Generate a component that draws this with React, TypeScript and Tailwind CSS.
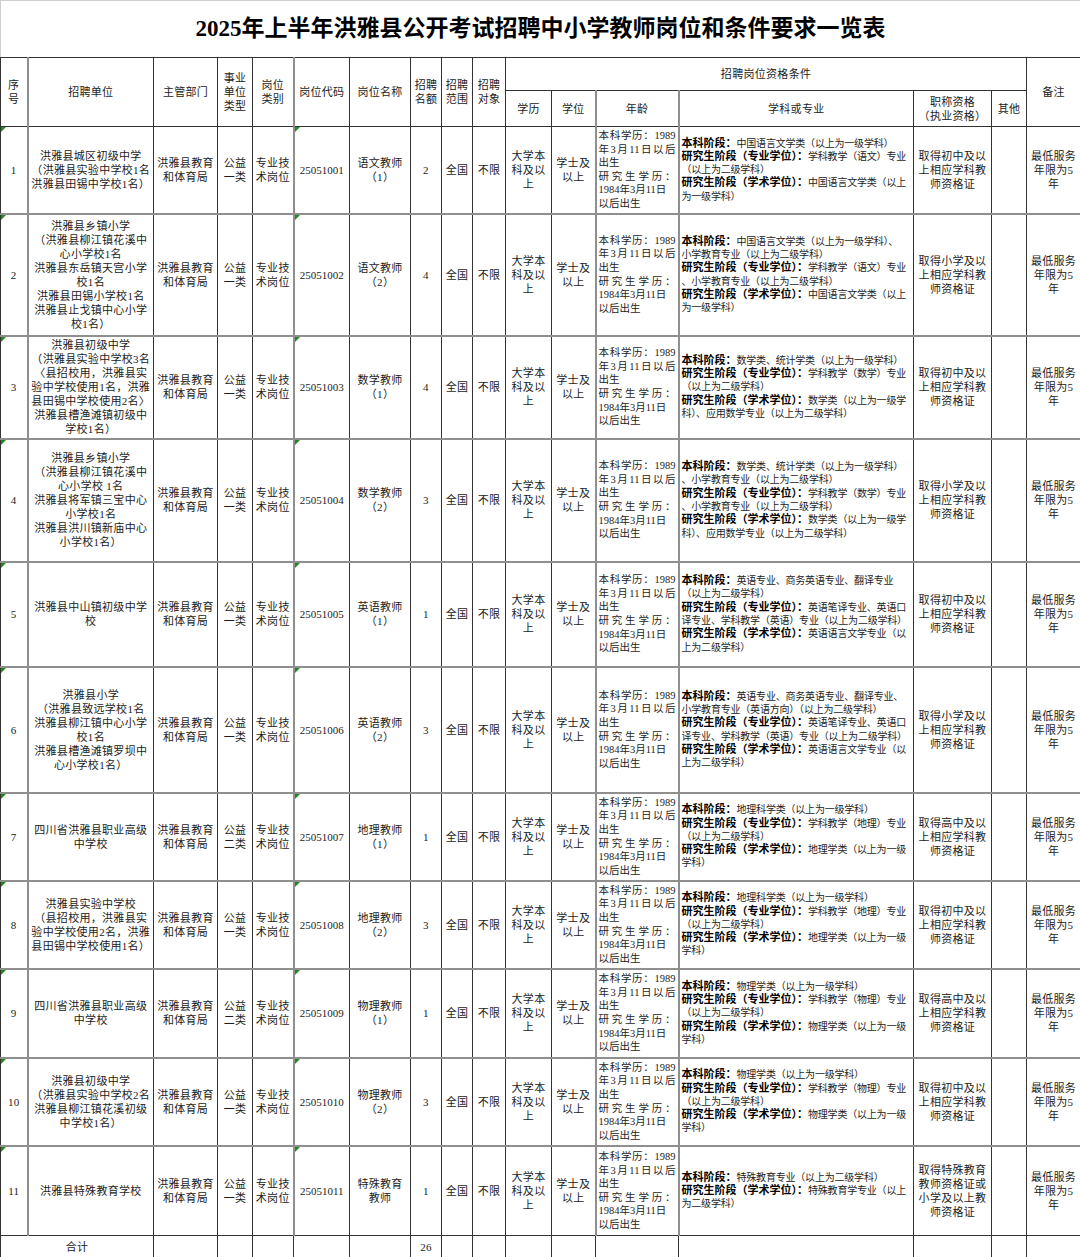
const AGE = [
  { t: '本科学历：1989', j: true },
  { t: '年3月11日以后', j: true },
  { t: '出生', j: false },
  { t: '研究生学历：', j: true },
  { t: '1984年3月11日', j: false },
  { t: '以后出生', j: false },
]

type Row = {
  unit: string[]
  kind: string
  code: string
  name: string[]
  n: number
  sub: string[]
  cert: string
  h: string
}

const geo = ['本科阶段：地理科学类（以上为一级学科）', '研究生阶段（专业学位）：学科教学（地理）专业', '（以上为二级学科）', '研究生阶段（学术学位）：地理学类（以上为一级', '学科）']
const phy = ['本科阶段：物理学类（以上为一级学科）', '研究生阶段（专业学位）：学科教学（物理）专业', '（以上为二级学科）', '研究生阶段（学术学位）：物理学类（以上为一级', '学科）']

const rows: Row[] = [
  {
    unit: ['洪雅县城区初级中学', '（洪雅县实验中学校1名', '洪雅县田锡中学校1名）'],
    kind: '公益一类',
    code: '25051001',
    name: ['语文教师', '（1）'],
    n: 2,
    sub: ['本科阶段：中国语言文学类（以上为一级学科）', '研究生阶段（专业学位）：学科教学（语文）专业', '（以上为二级学科）', '研究生阶段（学术学位）：中国语言文学类（以上', '为一级学科）'],
    cert: '取得初中及以上相应学科教师资格证',
    h: 'h-[87px]',
  },
  {
    unit: ['洪雅县乡镇小学', '（洪雅县柳江镇花溪中', '心小学校1名', '洪雅县东岳镇天宫小学', '校1名', '洪雅县田锡小学校1名', '洪雅县止戈镇中心小学', '校1名）'],
    kind: '公益一类',
    code: '25051002',
    name: ['语文教师', '（2）'],
    n: 4,
    sub: ['本科阶段：中国语言文学类（以上为一级学科）、', '小学教育专业（以上为二级学科）', '研究生阶段（专业学位）：学科教学（语文）专业', '、小学教育专业（以上为二级学科）', '研究生阶段（学术学位）：中国语言文学类（以上', '为一级学科）'],
    cert: '取得小学及以上相应学科教师资格证',
    h: 'h-[122px]',
  },
  {
    unit: ['洪雅县初级中学', '（洪雅县实验中学校3名', '〈县招校用，洪雅县实', '验中学校使用1名，洪雅', '县田锡中学校使用2名〉', '洪雅县槽渔滩镇初级中', '学校1名）'],
    kind: '公益一类',
    code: '25051003',
    name: ['数学教师', '（1）'],
    n: 4,
    sub: ['本科阶段：数学类、统计学类（以上为一级学科）', '研究生阶段（专业学位）：学科教学（数学）专业', '（以上为二级学科）', '研究生阶段（学术学位）：数学类（以上为一级学', '科）、应用数学专业（以上为二级学科）'],
    cert: '取得初中及以上相应学科教师资格证',
    h: 'h-[103px]',
  },
  {
    unit: ['洪雅县乡镇小学', '（洪雅县柳江镇花溪中', '心小学校 1名', '洪雅县将军镇三宝中心', '小学校1名', '洪雅县洪川镇新庙中心', '小学校1名）'],
    kind: '公益一类',
    code: '25051004',
    name: ['数学教师', '（2）'],
    n: 3,
    sub: ['本科阶段：数学类、统计学类（以上为一级学科）', '、小学教育专业（以上为二级学科）', '研究生阶段（专业学位）：学科教学（数学）专业', '、小学教育专业（以上为二级学科）', '研究生阶段（学术学位）：数学类（以上为一级学', '科）、应用数学专业（以上为二级学科）'],
    cert: '取得小学及以上相应学科教师资格证',
    h: 'h-[123px]',
  },
  {
    unit: ['洪雅县中山镇初级中学', '校'],
    kind: '公益一类',
    code: '25051005',
    name: ['英语教师', '（1）'],
    n: 1,
    sub: ['本科阶段：英语专业、商务英语专业、翻译专业', '（以上为二级学科）', '研究生阶段（专业学位）：英语笔译专业、英语口', '译专业、学科教学（英语）专业（以上为二级学科）', '研究生阶段（学术学位）：英语语言文学专业（以', '上为二级学科）'],
    cert: '取得初中及以上相应学科教师资格证',
    h: 'h-[105px]',
  },
  {
    unit: ['洪雅县小学', '（洪雅县致远学校1名', '洪雅县柳江镇中心小学', '校1名', '洪雅县槽渔滩镇罗坝中', '心小学校1名）'],
    kind: '公益一类',
    code: '25051006',
    name: ['英语教师', '（2）'],
    n: 3,
    sub: ['本科阶段：英语专业、商务英语专业、翻译专业、', '小学教育专业（英语方向）（以上为二级学科）', '研究生阶段（专业学位）：英语笔译专业、英语口', '译专业、学科教学（英语）专业（以上为二级学科）', '研究生阶段（学术学位）：英语语言文学专业（以', '上为二级学科）'],
    cert: '取得小学及以上相应学科教师资格证',
    h: 'h-[126px]',
  },
  {
    unit: ['四川省洪雅县职业高级', '中学校'],
    kind: '公益二类',
    code: '25051007',
    name: ['地理教师', '（1）'],
    n: 1,
    sub: geo,
    cert: '取得高中及以上相应学科教师资格证',
    h: 'h-[88px]',
  },
  {
    unit: ['洪雅县实验中学校', '（县招校用，洪雅县实', '验中学校使用2名，洪雅', '县田锡中学校使用1名）'],
    kind: '公益一类',
    code: '25051008',
    name: ['地理教师', '（2）'],
    n: 3,
    sub: geo,
    cert: '取得初中及以上相应学科教师资格证',
    h: 'h-[88px]',
  },
  {
    unit: ['四川省洪雅县职业高级', '中学校'],
    kind: '公益二类',
    code: '25051009',
    name: ['物理教师', '（1）'],
    n: 1,
    sub: phy,
    cert: '取得高中及以上相应学科教师资格证',
    h: 'h-[89px]',
  },
  {
    unit: ['洪雅县初级中学', '（洪雅县实验中学校2名', '洪雅县柳江镇花溪初级', '中学校1名）'],
    kind: '公益一类',
    code: '25051010',
    name: ['物理教师', '（2）'],
    n: 3,
    sub: phy,
    cert: '取得初中及以上相应学科教师资格证',
    h: 'h-[88px]',
  },
  {
    unit: ['洪雅县特殊教育学校'],
    kind: '公益一类',
    code: '25051011',
    name: ['特殊教育', '教师'],
    n: 1,
    sub: ['本科阶段：特殊教育专业（以上为二级学科）', '研究生阶段（学术学位）：特殊教育学专业（以上', '为二级学科）'],
    cert: '取得特殊教育教师资格证或小学及以上教师资格证',
    h: 'h-[90px]',
  },
]

const td = 'border border-[#333] px-[2px] py-0 text-center align-middle'
const grayL = 'border-l-2 border-l-[#8f8f8f]'

function Tick() {
  return (
    <span className="absolute left-0 top-0 h-0 w-0 border-r-[5px] border-t-[5px] border-r-transparent border-t-[#1f8a1f]" />
  )
}

function Lines({ items }: { items: string[] }) {
  return (
    <>
      {items.map((l, i) => (
        <div key={i} className="whitespace-nowrap">
          {l}
        </div>
      ))}
    </>
  )
}

// the bold heading at the start of a line, if any
function SubLine({ text }: { text: string }) {
  const m = text.match(/^(本科阶段：|研究生阶段（专业学位）：|研究生阶段（学术学位）：)(.*)$/)
  const head = m ? m[1] : ''
  const rest = m ? m[2] : text
  return (
    <div>
      {head && <span className="font-bold text-black">{head}</span>}
      <span className="text-[10px] tracking-[-0.2px]">{rest}</span>
    </div>
  )
}

export default function App() {
  return (
    <div className="w-[1080px] h-[1257px] overflow-hidden bg-white text-[#1c1c1c] text-[11px] leading-[14px] tracking-[0.3px] [font-family:'Liberation_Serif','Noto_Sans_CJK_SC',serif]">
      <div className="flex h-[57px] items-center justify-center border-l border-t border-[#cfcfcf] text-[23px] font-bold tracking-normal text-black">
        2025年上半年洪雅县公开考试招聘中小学教师岗位和条件要求一览表
      </div>
      <table className="w-[1080px] table-fixed border-collapse">
        <colgroup>
          <col className="w-[27px]" />
          <col className="w-[126px]" />
          <col className="w-[64px]" />
          <col className="w-[35px]" />
          <col className="w-[41px]" />
          <col className="w-[56px]" />
          <col className="w-[61px]" />
          <col className="w-[31px]" />
          <col className="w-[31px]" />
          <col className="w-[33px]" />
          <col className="w-[46px]" />
          <col className="w-[44px]" />
          <col className="w-[83px]" />
          <col className="w-[235px]" />
          <col className="w-[78px]" />
          <col className="w-[35px]" />
          <col className="w-[54px]" />
        </colgroup>
        <thead>
          <tr className="h-[33px]">
            <td rowSpan={2} className={td}>
              <Lines items={['序', '号']} />
            </td>
            <td rowSpan={2} className={`${td} ${grayL}`}>招聘单位</td>
            <td rowSpan={2} className={td}>主管部门</td>
            <td rowSpan={2} className={td}>
              <Lines items={['事业', '单位', '类型']} />
            </td>
            <td rowSpan={2} className={td}>
              <Lines items={['岗位', '类别']} />
            </td>
            <td rowSpan={2} className={`${td} ${grayL}`}>岗位代码</td>
            <td rowSpan={2} className={td}>岗位名称</td>
            <td rowSpan={2} className={td}>
              <Lines items={['招聘', '名额']} />
            </td>
            <td rowSpan={2} className={td}>
              <Lines items={['招聘', '范围']} />
            </td>
            <td rowSpan={2} className={td}>
              <Lines items={['招聘', '对象']} />
            </td>
            <td colSpan={6} className={td}>招聘岗位资格条件</td>
            <td rowSpan={2} className={td}>备注</td>
          </tr>
          <tr className="h-[36px]">
            <td className={td}>学历</td>
            <td className={td}>学位</td>
            <td className={`${td} ${grayL}`}>年龄</td>
            <td className={`${td} ${grayL}`}>学科或专业</td>
            <td className={td}>
              <Lines items={['职称资格', '（执业资格）']} />
            </td>
            <td className={td}>其他</td>
          </tr>
        </thead>
        <tbody>
          {rows.map((r, i) => {
            const top = i > 0 ? 'border-t-2 border-t-[#8f8f8f]' : ''
            return (
              <tr key={r.code} className={r.h}>
                <td className={`${td} ${top} relative`}>
                  <Tick />
                  {i + 1}
                </td>
                <td className={`${td} ${top} ${grayL}`}>
                  <Lines items={r.unit} />
                </td>
                <td className={`${td} ${top}`}>洪雅县教育和体育局</td>
                <td className={`${td} ${top}`}>{r.kind}</td>
                <td className={`${td} ${top}`}>专业技术岗位</td>
                <td className={`${td} ${top} ${grayL} relative tracking-normal`}>
                  <Tick />
                  {r.code}
                </td>
                <td className={`${td} ${top}`}>
                  <Lines items={r.name} />
                </td>
                <td className={`${td} ${top}`}>{r.n}</td>
                <td className={`${td} ${top}`}>全国</td>
                <td className={`${td} ${top}`}>不限</td>
                <td className={`${td} ${top}`}>大学本科及以上</td>
                <td className={`${td} ${top}`}>学士及以上</td>
                <td className={`${td} ${top} ${grayL} text-left text-[10.5px] leading-[13.6px] tracking-normal`}>
                  {AGE.map((a, k) => (
                    <div key={k} className={`whitespace-nowrap ${a.j ? '[text-align-last:justify]' : ''}`}>
                      {a.t}
                    </div>
                  ))}
                </td>
                <td className={`${td} ${top} ${grayL} text-left leading-[13.3px] tracking-normal`}>
                  {r.sub.map((s, k) => (
                    <SubLine key={k} text={s} />
                  ))}
                </td>
                <td className={`${td} ${top} px-[4px] tracking-[0.3px]`}>{r.cert}</td>
                <td className={`${td} ${top}`}></td>
                <td className={`${td} ${top}`}>
                  <Lines items={['最低服务', '年限为5', '年']} />
                </td>
              </tr>
            )
          })}
          <tr className="h-[22px]">
            <td colSpan={2} className={td}>合计</td>
            <td className={td}></td>
            <td className={td}></td>
            <td className={td}></td>
            <td className={td}></td>
            <td className={td}></td>
            <td className={td}>26</td>
            <td className={td}></td>
            <td className={td}></td>
            <td className={td}></td>
            <td className={td}></td>
            <td className={td}></td>
            <td className={td}></td>
            <td className={td}></td>
            <td className={td}></td>
            <td className={td}></td>
          </tr>
        </tbody>
      </table>
    </div>
  )
}
